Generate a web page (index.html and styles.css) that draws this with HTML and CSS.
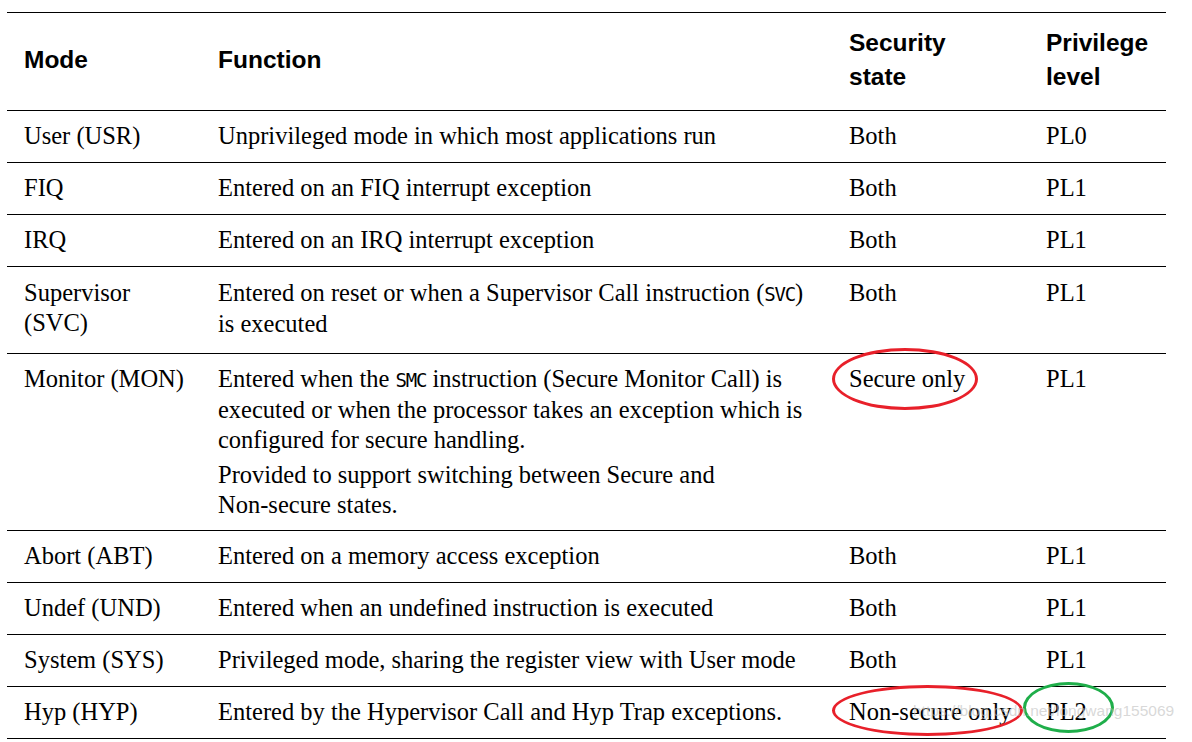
FILE: index.html
```html
<!DOCTYPE html>
<html>
<head>
<meta charset="utf-8">
<link rel="stylesheet" href="styles.css">
</head>
<body>
<div class="page">
<table class="modes">
  <colgroup>
    <col class="c1"><col class="c2"><col class="c3"><col class="c4">
  </colgroup>
  <thead>
    <tr>
      <th>Mode</th>
      <th>Function</th>
      <th>Security<br>state</th>
      <th>Privilege<br>level</th>
    </tr>
  </thead>
  <tbody>
    <tr><td>User (USR)</td><td>Unprivileged mode in which most applications run</td><td>Both</td><td>PL0</td></tr>
    <tr><td>FIQ</td><td>Entered on an FIQ interrupt exception</td><td>Both</td><td>PL1</td></tr>
    <tr><td>IRQ</td><td>Entered on an IRQ interrupt exception</td><td>Both</td><td>PL1</td></tr>
    <tr class="two"><td>Supervisor<br>(SVC)</td><td>Entered on reset or when a Supervisor Call instruction (<code>SVC</code>)<br>is executed</td><td>Both</td><td>PL1</td></tr>
    <tr class="tall"><td>Monitor (MON)</td><td><p>Entered when the <code>SMC</code> instruction (Secure Monitor Call) is<br>executed or when the processor takes an exception which is<br>configured for secure handling.</p><p class="p2">Provided to support switching between Secure and<br>Non-secure states.</p></td><td><span class="mark red m1">Secure only</span></td><td>PL1</td></tr>
    <tr><td>Abort (ABT)</td><td>Entered on a memory access exception</td><td>Both</td><td>PL1</td></tr>
    <tr><td>Undef (UND)</td><td>Entered when an undefined instruction is executed</td><td>Both</td><td>PL1</td></tr>
    <tr><td>System (SYS)</td><td>Privileged mode, sharing the register view with User mode</td><td>Both</td><td>PL1</td></tr>
    <tr><td>Hyp (HYP)</td><td>Entered by the Hypervisor Call and Hyp Trap exceptions.</td><td><span class="mark red m2">Non-secure only</span></td><td><span class="mark green m3">PL2</span></td></tr>
  </tbody>
</table>
<div class="watermark">https://blog.csdn.net/longwang155069</div>
</div>
</body>
</html>
```
FILE: styles.css
```css
html, body {
  margin: 0;
  padding: 0;
  background: #ffffff;
}
.page {
  position: relative;
  padding: 12px 0 0 7px;
  width: 1159px;
}
.modes {
  border-collapse: collapse;
  width: 1159px;
  table-layout: fixed;
  color: #000;
}
.c1 { width: 194px; }
.c2 { width: 631px; }
.c3 { width: 197px; }
.c4 { width: 137px; }
.modes th,
.modes td {
  text-align: left;
  vertical-align: top;
  padding: 11px 0 11px 17px;
  border-top: 1px solid #000;
  border-bottom: 1px solid #000;
}
.modes th {
  font-family: "Liberation Sans", Arial, sans-serif;
  font-weight: bold;
  font-size: 24.5px;
  line-height: 34px;
  height: 98px;
  box-sizing: border-box;
  padding-top: 12px;
  vertical-align: middle;
  padding-bottom: 16px;
}
.modes td {
  font-family: "Liberation Serif", "Times New Roman", serif;
  font-size: 24.5px;
  line-height: 30px;
  height: 52px;
  box-sizing: border-box;
  padding-top: 10px;
}
.modes tr.two td {
  padding-top: 11px;
  padding-bottom: 14px;
}
.modes tr.tall td {
  padding-bottom: 10px;
}
.modes p {
  margin: 0;
}
.modes p.p2 {
  margin-top: 5px;
}
code {
  font-family: "DejaVu Sans Mono", "Liberation Mono", monospace;
  font-size: 19px;
  letter-spacing: -1.2px;
}
.mark {
  position: relative;
}
.mark::after {
  content: "";
  position: absolute;
  border-radius: 50%;
  border: 3.5px solid;
  box-sizing: border-box;
}
.red::after { border-color: #e8202a; }
.green::after { border-color: #1fae4a; }
.m1::after {
  left: -17px; top: -17px; width: 146px; height: 62px;
}
.m2::after {
  left: -17px; top: -13px; width: 191px; height: 51px;
}
.m3::after {
  left: -23px; top: -16px; width: 91px; height: 51px;
}
.watermark {
  position: absolute;
  left: 913px;
  top: 702px;
  font-family: "Liberation Sans", Arial, sans-serif;
  font-size: 15.5px;
  color: rgba(190, 190, 190, 0.6);
  white-space: nowrap;
  pointer-events: none;
}
```
